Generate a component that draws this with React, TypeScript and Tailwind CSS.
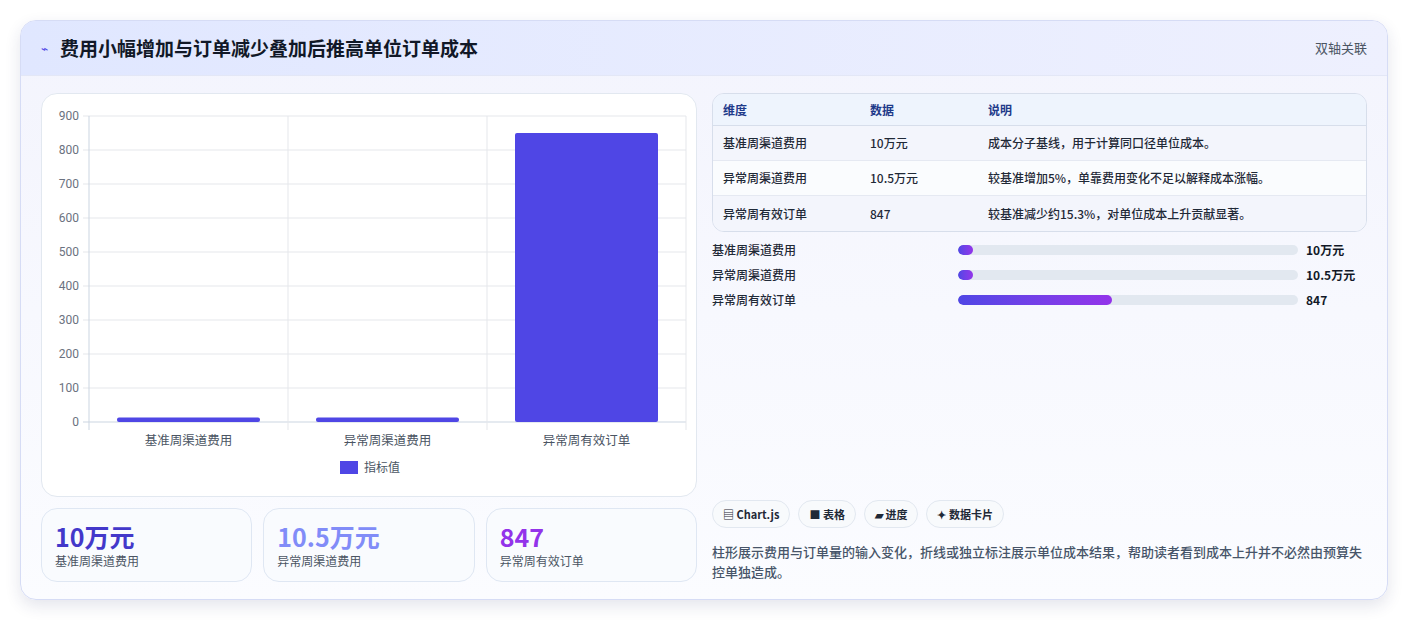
import React from "react";

const F = { fontFamily: '"Noto Sans CJK SC", "Noto Sans", sans-serif' };

function Chart() {
  const x0 = 47, x1 = 644, yTop = 22, yBot = 328;
  const ticks = [0, 100, 200, 300, 400, 500, 600, 700, 800, 900];
  const vals = [10, 10.5, 847];
  const labels = ["基准周渠道费用", "异常周渠道费用", "异常周有效订单"];
  const cw = (x1 - x0) / 3;
  const y = (v: number) => yBot - (v / 900) * (yBot - yTop);
  return (
    <svg width="656" height="403" style={F}>
      {ticks.map((t) => (
        <g key={t}>
          <line x1={x0 - 6} x2={x1} y1={y(t)} y2={y(t)} stroke={t === 0 ? "#cbd5e1" : "#e5e7eb"} />
          <text x={x0 - 10} y={y(t) + 4} textAnchor="end" fontSize="12" fill="#6b7280" style={{ fontFamily: "Roboto, sans-serif" }}>{t}</text>
        </g>
      ))}
      {[0, 1, 2, 3].map((i) => (
        <line key={i} x1={x0 + i * cw} x2={x0 + i * cw} y1={yTop} y2={yBot + 8} stroke={i === 0 ? "#cbd5e1" : "#e5e7eb"} />
      ))}
      {vals.map((v, i) => (
        <rect key={i} x={x0 + i * cw + 28} width={cw - 56} y={y(v) - 1} height={yBot - y(v) + 1} fill="#4f46e5" rx="2" />
      ))}
      {labels.map((l, i) => (
        <text key={l} x={x0 + i * cw + cw / 2} y={351} textAnchor="middle" fontSize="12.5" fill="#4b5563">{l}</text>
      ))}
      <rect x="298" y="367" width="18" height="13" fill="#4f46e5" />
      <text x="322" y="378" fontSize="12" fill="#4b5563">指标值</text>
    </svg>
  );
}

export default function App() {
  const rows = [
    ["基准周渠道费用", "10万元", "成本分子基线，用于计算同口径单位成本。"],
    ["异常周渠道费用", "10.5万元", "较基准增加5%，单靠费用变化不足以解释成本涨幅。"],
    ["异常周有效订单", "847", "较基准减少约15.3%，对单位成本上升贡献显著。"],
  ];
  const prog = [
    ["基准周渠道费用", "10万元", "4.5%"],
    ["异常周渠道费用", "10.5万元", "4.5%"],
    ["异常周有效订单", "847", "45.3%"],
  ];
  return (
    <div className="w-[1408px] h-[620px] bg-white pt-5 pl-5" style={F}>
      <div className="w-[1368px] h-[580px] rounded-2xl border border-[#d6dcf5] bg-gradient-to-b from-[#f3f4fd] to-[#fbfcff] overflow-hidden shadow-[0_6px_16px_rgba(30,41,99,0.12)]">
        <div className="h-[55px] flex items-center justify-between px-5 bg-gradient-to-r from-[#e0e7ff] to-[#eef0fe] border-b border-[#e3e7f6]">
          <div className="flex items-center gap-3">
            <span className="text-[#4f46e5] text-xs">⌁</span>
            <span className="text-[19px] font-bold text-[#111827]">费用小幅增加与订单减少叠加后推高单位订单成本</span>
          </div>
          <span className="text-[13px] text-[#4b5563]">双轴关联</span>
        </div>
        <div className="flex gap-[15px] px-5 pt-[17px]">
          <div className="w-[656px] flex flex-col gap-[11px]">
            <div className="h-[404px] rounded-2xl border border-[#e2e8f0] bg-white overflow-hidden">
              <Chart />
            </div>
            <div className="grid grid-cols-3 gap-[11px]">
              {[
                ["10万元", "text-[#4338ca]", "基准周渠道费用"],
                ["10.5万元", "text-[#818cf8]", "异常周渠道费用"],
                ["847", "text-[#9333ea]", "异常周有效订单"],
              ].map(([v, c, l]) => (
                <div key={l} className="h-[74px] rounded-2xl border border-[#dfe7f3] bg-[#f9fbfe] px-[13px] pt-[11px]">
                  <div className={`text-[25px] leading-[32px] font-bold ${c}`}>{v}</div>
                  <div className="text-[12px] text-[#4b5563] leading-[18px]">{l}</div>
                </div>
              ))}
            </div>
          </div>
          <div className="flex-1 flex flex-col">
            <div className="rounded-xl border border-[#d7deeb] overflow-hidden text-[12px]">
              <div className="h-[32px] flex items-center bg-[#eef4fd] text-[#1e3a8a] font-semibold border-b border-[#d7deeb]">
                <div className="w-[157px] pl-[10px]">维度</div>
                <div className="w-[118px]">数据</div>
                <div>说明</div>
              </div>
              {rows.map((r, i) => (
                <div key={i} className={`h-[35px] flex items-center text-[#1f2937] font-medium ${i === 1 ? "bg-[#fafcfe]" : "bg-[#f3f5fc]"} ${i < 2 ? "border-b border-[#e5e9f2]" : ""}`}>
                  <div className="w-[157px] pl-[10px]">{r[0]}</div>
                  <div className="w-[118px]">{r[1]}</div>
                  <div>{r[2]}</div>
                </div>
              ))}
            </div>
            <div className="mt-[10px] flex flex-col gap-[9px]">
              {prog.map((p) => (
                <div key={p[0]} className="flex items-center h-[16px] text-[12px]">
                  <div className="w-[246px] text-[#1f2937] font-medium">{p[0]}</div>
                  <div className="w-[340px] h-[10px] rounded-full bg-[#e2e8f0] overflow-hidden">
                    <div className="h-full rounded-full bg-gradient-to-r from-[#4f46e5] to-[#9333ea]" style={{ width: p[2] }} />
                  </div>
                  <div className="ml-2 font-bold text-[#111827]">{p[1]}</div>
                </div>
              ))}
            </div>
            <div className="mt-auto flex gap-2 mb-[14px]">
              {["▤ Chart.js", "■ 表格", "▰ 进度", "✦ 数据卡片"].map((c) => (
                <div key={c} className="h-[28px] px-[10px] rounded-full border border-[#e2e8f0] bg-[#f8fafc] flex items-center text-[11px] font-semibold text-[#1f2937]">{c}</div>
              ))}
            </div>
            <div className="text-[13px] leading-[20px] text-[#475569] font-medium">
              柱形展示费用与订单量的输入变化，折线或独立标注展示单位成本结果，帮助读者看到成本上升并不必然由预算失控单独造成。
            </div>
          </div>
        </div>
      </div>
    </div>
  );
}
